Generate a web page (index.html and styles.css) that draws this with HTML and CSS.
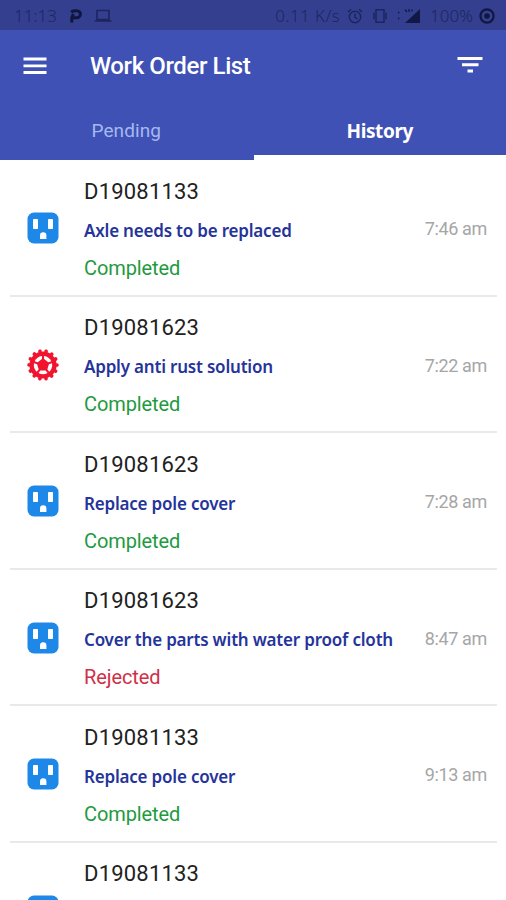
FILE: index.html
```html
<!DOCTYPE html>
<html lang="en">
<head>
    <meta charset="UTF-8">
    <meta name="viewport" content="width=device-width, initial-scale=1.0">
    <title>Work Order List</title>
    <link rel="stylesheet" href="styles.css">
</head>
<body>
    <!-- shared icons -->
    <svg class="icon-defs" width="0" height="0">
        <symbol id="icon-outlet" viewBox="0 0 32 32">
            <rect x="0.5" y="0.5" width="31" height="31" rx="6.5" fill="#1e88e9"/>
            <rect x="6" y="7" width="5" height="10" rx="0.8" fill="#fff"/>
            <rect x="21" y="7" width="5" height="10" rx="0.8" fill="#fff"/>
            <path d="M13 27v-3.500a3.200 3.200 0 0 1 6.400 0V27z" fill="#fff"/>
        </symbol>
        <symbol id="icon-gear" viewBox="0 0 32 32">
            <circle cx="16" cy="16" r="13.600" fill="#f0142f"/>
            <circle cx="16" cy="16" r="14" fill="none" stroke="#f0142f" stroke-width="3.600" stroke-linecap="round" stroke-dasharray="0.100 6.183" pathLength="87.960"/>
            <g fill="#fff">
                <path id="hole" d="M13.400 21.400h5.200l1.900 2.600q-4.500 2.400-9 0z"/>
                <use href="#hole" transform="rotate(72 16 16)"/>
                <use href="#hole" transform="rotate(144 16 16)"/>
                <use href="#hole" transform="rotate(216 16 16)"/>
                <use href="#hole" transform="rotate(288 16 16)"/>
            </g>
        </symbol>
    </svg>

    <!-- status bar -->
    <div class="status-bar">
        <span class="clock">11:13</span>
        <svg class="icon-p" width="14" height="14" viewBox="0 0 14 14">
            <path d="M2.800 13.500V8.500L4.500 5M2 3Q4 1.800 7.500 1.800c5.500 0 5 7 0 7H4" fill="none" stroke="currentColor" stroke-width="3"/>
        </svg>
        <svg class="icon-laptop" width="18" height="14" viewBox="0 0 18 14">
            <path d="M3 1.500h12v9H3zM0.500 12h17" fill="none" stroke="currentColor" stroke-width="1.600"/>
        </svg>
        <span class="speed">0.11 K/s</span>
        <svg class="icon-alarm" width="16" height="16" viewBox="0 0 16 16">
            <g fill="none" stroke="currentColor" stroke-width="1.500">
                <circle cx="8" cy="9" r="5.700"/>
                <path d="M8 5.500V9.300l2.500 1.500M1 4l3-2.600M15 4l-3-2.600"/>
            </g>
        </svg>
        <svg class="icon-vibrate" width="16" height="16" viewBox="0 0 16 16">
            <path d="M4 1.700h8v12.600h-8zM2 4.500v7M14 4.500v7" fill="none" stroke="currentColor" stroke-width="1.500"/>
        </svg>
        <svg class="icon-signal" width="24" height="16" viewBox="0 0 24 16">
            <path d="M23 1v14H8z" fill="currentColor"/>
            <path d="M8 1.500l2 2.500M12 1v3M15 1.500v2M1 4.500h1.500M1 10.500h1.500" stroke="currentColor" stroke-width="1.300"/>
        </svg>
        <span class="battery">100%</span>
        <svg class="icon-battery" width="16" height="16" viewBox="0 0 16 16">
            <circle cx="8" cy="8" r="6.600" fill="none" stroke="currentColor" stroke-width="2.200"/>
            <circle cx="8" cy="8" r="2.800" fill="currentColor"/>
        </svg>
    </div>

    <!-- app bar -->
    <header class="app-bar">
        <svg width="24" height="18" viewBox="0 0 24 18">
            <path d="M0.500 2h23M0.500 8.800h23M0.500 15.500h23" stroke="#fff" stroke-width="2.800"/>
        </svg>
        <h1>Work Order List</h1>
        <svg class="filter" width="26" height="18" viewBox="0 0 26 18">
            <path d="M0.500 1.500h25M5 7.800h16.500M10.500 14h5.500" stroke="#fff" stroke-width="3"/>
        </svg>
    </header>

    <nav class="tabs">
        <div class="tab">Pending</div>
        <div class="tab active">History</div>
    </nav>

    <main class="order-list">
        <div class="order">
            <svg class="order-icon"><use href="#icon-outlet"/></svg>
            <div class="order-info">
                <div class="order-id">D19081133</div>
                <div class="order-title">Axle needs to be replaced</div>
                <div class="order-status completed">Completed</div>
            </div>
            <div class="order-time">7:46 am</div>
        </div>
        <div class="order">
            <svg class="order-icon"><use href="#icon-gear"/></svg>
            <div class="order-info">
                <div class="order-id">D19081623</div>
                <div class="order-title">Apply anti rust solution</div>
                <div class="order-status completed">Completed</div>
            </div>
            <div class="order-time">7:22 am</div>
        </div>
        <div class="order">
            <svg class="order-icon"><use href="#icon-outlet"/></svg>
            <div class="order-info">
                <div class="order-id">D19081623</div>
                <div class="order-title">Replace pole cover</div>
                <div class="order-status completed">Completed</div>
            </div>
            <div class="order-time">7:28 am</div>
        </div>
        <div class="order">
            <svg class="order-icon"><use href="#icon-outlet"/></svg>
            <div class="order-info">
                <div class="order-id">D19081623</div>
                <div class="order-title">Cover the parts with water proof cloth</div>
                <div class="order-status rejected">Rejected</div>
            </div>
            <div class="order-time">8:47 am</div>
        </div>
        <div class="order">
            <svg class="order-icon"><use href="#icon-outlet"/></svg>
            <div class="order-info">
                <div class="order-id">D19081133</div>
                <div class="order-title">Replace pole cover</div>
                <div class="order-status completed">Completed</div>
            </div>
            <div class="order-time">9:13 am</div>
        </div>
        <div class="order">
            <svg class="order-icon"><use href="#icon-outlet"/></svg>
            <div class="order-info">
                <div class="order-id">D19081133</div>
            </div>
        </div>
    </main>
</body>
</html>
```
FILE: styles.css
```css
* {
    box-sizing: border-box;
}
body {
    margin: 0;
    height: 900px;
    overflow: hidden;
    display: flex;
    flex-direction: column;
    font-family: Roboto, sans-serif;
    background-color: #fff;
}
.icon-defs {
    position: absolute;
}

/* status bar */
.status-bar {
    flex: none;
    display: flex;
    align-items: center;
    height: 30px;
    padding: 1px 11px 0 14px;
    background-color: #34408f;
    color: #1d2560;
    font-family: "Noto Sans", sans-serif;
    font-size: 17px;
    font-weight: 300;
}
.icon-p {
    margin-left: 12px;
    color: #10163f;
}
.icon-laptop {
    margin-left: 11px;
}
.speed {
    margin-left: auto;
    letter-spacing: 0.4px;
}
.icon-alarm {
    margin-left: 7px;
}
.icon-vibrate {
    margin-left: 9px;
}
.icon-signal {
    margin-left: 9px;
    color: #121845;
}
.battery {
    margin-left: 9px;
}
.icon-battery {
    margin-left: 6px;
    color: #10163f;
}

/* app bar */
.app-bar {
    flex: none;
    display: flex;
    align-items: center;
    height: 71px;
    padding: 0 23px;
    background-color: #3f51b5;
}
.app-bar h1 {
    margin: 0 0 0 43px;
    color: #fff;
    font-size: 24px;
    font-weight: 500;
    letter-spacing: -0.4px;
}
.filter {
    margin-left: auto;
}

/* tabs */
.tabs {
    flex: none;
    display: flex;
    height: 59px;
    background-color: #3f51b5;
}
.tab {
    flex: 1;
    line-height: 60px;
    text-align: center;
    color: #a5b9f0;
    font-size: 19px;
    letter-spacing: 0.1px;
}
.tab.active {
    margin-left: 1px;
    color: #fff;
    font-family: "Noto Sans", sans-serif;
    font-weight: 700;
    letter-spacing: -0.4px;
    border-bottom: 5px solid #fff;
}

/* order rows */
.order-list {
    flex: 1;
    overflow: hidden;
    padding: 0 9px 0 10px;
}
.order {
    display: flex;
    height: 136.5px;
    padding: 0 10px 0 17px;
    border-bottom: 2px solid #e9e9e9;
}
.order-icon {
    flex: none;
    width: 32px;
    height: 32px;
    margin-top: 52px;
}
.order-info {
    flex: 1;
    margin-left: 25px;
    padding-top: 12.5px;
    white-space: nowrap;
}
.order-id {
    line-height: 38px;
    font-size: 22px;
    letter-spacing: 0.2px;
    color: #222;
}
.order-title {
    line-height: 39px;
    font-family: "Noto Sans", sans-serif;
    font-size: 17px;
    font-weight: 600;
    letter-spacing: -0.2px;
    color: #25349a;
}
.order-status {
    line-height: 37.5px;
    font-size: 20px;
    letter-spacing: -0.1px;
}
.completed {
    color: #1f9a3f;
}
.rejected {
    color: #cf3048;
}
.order-time {
    margin-top: 50px;
    line-height: 37.5px;
    font-size: 18px;
    letter-spacing: -0.35px;
    color: #a6a6a6;
}
```
